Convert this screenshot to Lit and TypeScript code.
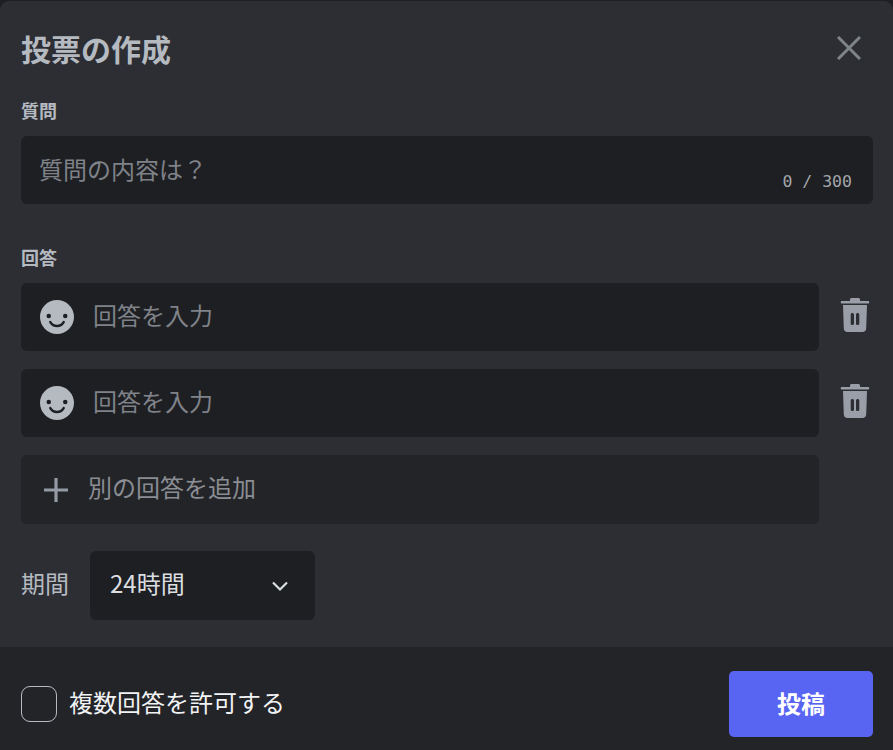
import { LitElement, html, css } from "lit";
import { customElement } from "lit/decorators.js";

const FONT = css`"Noto Sans CJK JP", "Noto Sans", sans-serif`;

const smile = html`<svg class="smile" viewBox="0 0 33 33" width="34" height="34">
  <circle cx="16.5" cy="16.5" r="16.5" fill="#b5bac1"/>
  <circle cx="8.5" cy="15.500" r="2.2" fill="#1e1f22"/>
  <circle cx="24.5" cy="15.500" r="2.2" fill="#1e1f22"/>
  <path d="M10 21.5c1.6 2.6 3.800 3.800 6.500 3.800s4.900-1.200 6.500-3.800" fill="none" stroke="#1e1f22" stroke-width="2.4" stroke-linecap="round"/>
</svg>`;

const trash = html`<svg class="trash" viewBox="0 0 30 36" width="30" height="36">
  <path fill="#9a9ea8" d="M10 2.500C10 1.700 10.700 1 11.500 1h7c.8 0 1.500.7 1.500 1.500V4h8c.7 0 1.300.5 1.300 1.250S28.700 6.500 28 6.500H2C1.300 6.500.7 6 .7 5.250S1.300 4 2 4h8V2.500z"/>
  <path fill="#9a9ea8" fill-rule="evenodd" d="M3 8h24l-.8 23.500c-.1 2-1.600 3.500-3.600 3.500H7.400c-2 0-3.500-1.500-3.600-3.500L3 8zm9.350 8c-.9 0-1.650.7-1.650 1.600v8.800c0 .9.750 1.600 1.650 1.600S14 27.300 14 26.400v-8.800c0-.9-.75-1.600-1.650-1.600zm5.300 0c-.9 0-1.650.7-1.650 1.600v8.800c0 .9.750 1.600 1.650 1.600s1.650-.7 1.650-1.600v-8.800c0-.9-.75-1.600-1.650-1.600z"/>
</svg>`;

@customElement("app-root")
export class AppRoot extends LitElement {
  static styles = css`
    :host {
      display: flex;
      flex-direction: column;
      width: 893px;
      height: 750px;
      overflow: hidden;
      background: #1e1f22;
      font-family: ${FONT};
    }
    .modal {
      flex: 1;
      display: flex;
      flex-direction: column;
      margin-top: 1px;
      background: #2d2e33;
      border-radius: 9px 9px 0 0;
      overflow: hidden;
    }
    .body {
      flex: 1;
      padding: 0 20px 0 21px;
      display: flex;
      flex-direction: column;
    }
    .header {
      height: 96px;
      display: flex;
      justify-content: space-between;
      align-items: flex-start;
      padding-top: 28px;
      box-sizing: border-box;
    }
    h1 {
      margin: 0;
      font-size: 30px;
      line-height: 38px;
      font-weight: 700;
      color: #b5bac1;
    }
    .close {
      margin: 7px 12px 0 0;
      display: block;
    }
    .label {
      font-size: 18px;
      line-height: 26px;
      font-weight: 700;
      color: #b5bac1;
      margin-bottom: 13px;
    }
    .label.first {
      height: 27px;
      margin-bottom: 12px;
    }
    .field {
      background: #1e1f22;
      border-radius: 6px;
      box-sizing: border-box;
      font-size: 24px;
      line-height: 34px;
      color: #7f8289;
    }
    .question {
      height: 68px;
      padding: 16px 18px;
      display: flex;
      justify-content: space-between;
      margin-bottom: 40px;
    }
    .count {
      align-self: flex-end;
      font-family: "DejaVu Sans Mono", monospace;
      font-size: 16.500px;
      line-height: 24px;
      color: #a3a6aa;
      margin-right: 3px;
      margin-bottom: -6px;
    }
    .row {
      display: flex;
      align-items: center;
      gap: 21px;
      margin-bottom: 18px;
    }
    .answer {
      width: 798px;
      height: 68px;
      display: flex;
      align-items: center;
      gap: 19px;
      padding-left: 19px;
    }
    .answer span {
      margin-bottom: 4px;
    }
    .add span {
      margin-bottom: 6px;
    }
    .smile { display: block; flex: none; }
    .trash {
      display: block;
      flex: none;
      margin-bottom: 4px;
    }
    .add {
      width: 798px;
      height: 69px;
      background: #232428;
      border-radius: 6px;
      box-sizing: border-box;
      display: flex;
      align-items: center;
      gap: 20px;
      padding-left: 23px;
      font-size: 24px;
      line-height: 34px;
      color: #8a8d93;
      margin-bottom: 27px;
    }
    .add svg { display: block; flex: none; }
    .duration {
      display: flex;
      align-items: center;
      gap: 21px;
      font-size: 24px;
      line-height: 34px;
      color: #b5bac1;
    }
    .duration span { margin-bottom: 6px; }
    .select {
      width: 225px;
      height: 69px;
      display: flex;
      align-items: center;
      justify-content: space-between;
      padding: 0 26px 0 20px;
      color: #dbdee1;
    }
    .footer {
      height: 103px;
      flex: none;
      box-sizing: border-box;
      background: #232428;
      display: flex;
      align-items: center;
      justify-content: space-between;
      padding: 11px 20px 0 21px;
    }
    .check {
      display: flex;
      align-items: center;
      gap: 12px;
      font-size: 24px;
      line-height: 34px;
      color: #f2f3f5;
    }
    .check span { margin-bottom: 4px; }
    .box {
      width: 36px;
      height: 36px;
      box-sizing: border-box;
      border: 1.500px solid #b5bac1;
      border-radius: 9px;
    }
    .submit {
      width: 144px;
      height: 66px;
      background: #5865f2;
      border-radius: 5px;
      display: flex;
      align-items: center;
      justify-content: center;
      font-size: 24px;
      font-weight: 700;
      color: #fff;
    }
    .submit span { margin-bottom: 4px; }
  `;

  render() {
    const answer = html`<div class="row">
      <div class="field answer">${smile}<span>回答を入力</span></div>
      ${trash}
    </div>`;
    return html`
      <div class="modal">
        <div class="body">
          <div class="header">
            <h1>投票の作成</h1>
            <svg class="close" viewBox="0 0 24 24" width="24" height="24">
              <path d="M1 1l22 22M23 1L1 23" stroke="#7f8489" stroke-width="3" fill="none"/>
            </svg>
          </div>
          <div class="label first">質問</div>
          <div class="field question">
            <span>質問の内容は？</span>
            <span class="count">0 / 300</span>
          </div>
          <div class="label">回答</div>
          ${answer}
          ${answer}
          <div class="add">
            <svg viewBox="0 0 24 24" width="24" height="24">
              <path d="M12 0v24M0 12h24" stroke="#949ba4" stroke-width="3.200" fill="none"/>
            </svg>
            <span>別の回答を追加</span>
          </div>
          <div class="duration">
            <span>期間</span>
            <div class="field select">
              <span>24時間</span>
              <svg viewBox="0 0 18 12" width="18" height="12">
                <path d="M2 2.500l7 7 7-7" stroke="#dbdee1" stroke-width="2.200" fill="none"/>
              </svg>
            </div>
          </div>
        </div>
        <div class="footer">
          <div class="check"><div class="box"></div><span>複数回答を許可する</span></div>
          <div class="submit"><span>投稿</span></div>
        </div>
      </div>
    `;
  }
}
